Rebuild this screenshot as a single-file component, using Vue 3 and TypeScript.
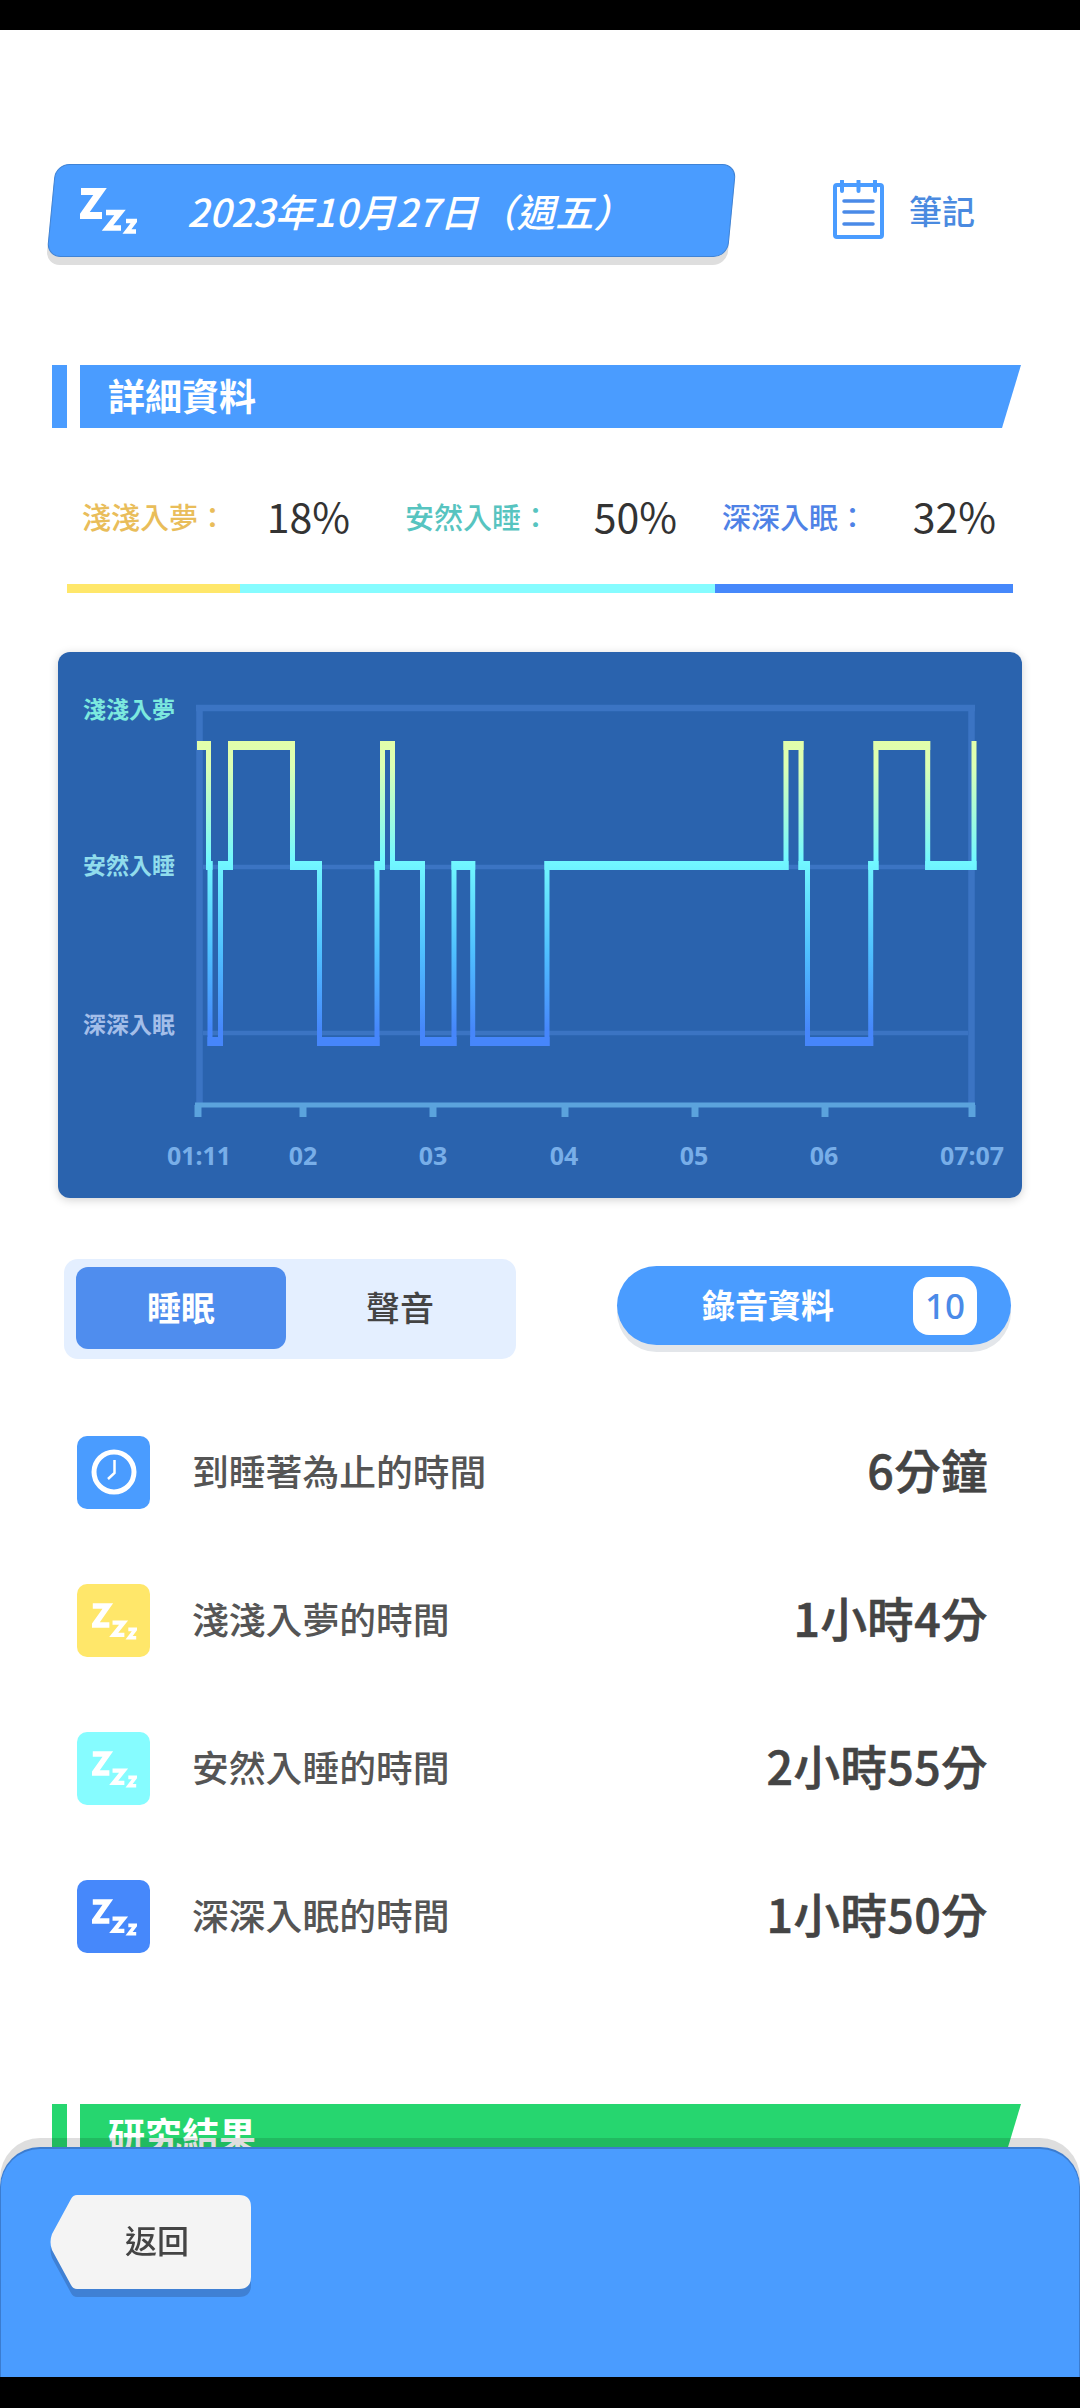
<template>
  <div class="page">
    <div class="status-bar"></div>

    <header class="top">
      <div class="date-pill">
        <svg class="zzz" viewBox="0 0 57 46">
          <path v-for="(d, i) in zzzPaths" :key="i" :d="d" fill="none" stroke="#fff" :stroke-width="zzzWidths[i]" />
        </svg>
        <span class="date-text">2023年10月27日（週五）</span>
      </div>
      <div class="note">
        <svg class="note-icon" viewBox="0 0 51 59">
          <rect x="2" y="5" width="47" height="52" rx="2" fill="none" stroke="#4a9cff" stroke-width="4" />
          <path d="M9 1v10M25.500 1v10M42 1v10" stroke="#4a9cff" stroke-width="4" stroke-linecap="round" />
          <path d="M11 21h29M11 32h29M11 44h29" stroke="#4a8ae8" stroke-width="3.500" stroke-linecap="round" />
        </svg>
        <span>筆記</span>
      </div>
    </header>

    <section class="section-head blue">
      <i class="accent"></i>
      <h2>詳細資料</h2>
    </section>

    <div class="legend">
      <div v-for="item in legend" :key="item.label" class="legend-item">
        <span class="legend-label" :style="{ color: item.color }">{{ item.label }}：</span>
        <span class="legend-value">{{ item.percent }}%</span>
      </div>
    </div>

    <div class="ratio-bar">
      <i v-for="item in legend" :key="item.label" :style="{ width: item.barWidth + 'px', background: item.bar }"></i>
    </div>

    <div class="chart-card">
      <svg class="chart" viewBox="58 652 964 546">
        <defs>
          <linearGradient id="sleepGrad" gradientUnits="userSpaceOnUse" x1="0" y1="741" x2="0" y2="1046">
            <stop offset="0" stop-color="#e2ffaa" />
            <stop offset="0.08" stop-color="#dcffb4" />
            <stop offset="0.39" stop-color="#72f8ff" />
            <stop offset="0.69" stop-color="#4fc0ff" />
            <stop offset="0.95" stop-color="#4686fb" />
          </linearGradient>
        </defs>
        <path d="M196 708H975M199.500 705V1105M971.500 705V1105" stroke="#3b74c3" stroke-width="6.500" fill="none" />
        <path d="M203 867H968M203 1033H968" stroke="#3b74c3" stroke-width="4.500" fill="none" />
        <path d="M195 1105H975" stroke="#5ba3dd" stroke-width="5" fill="none" />
        <path v-for="t in ticks" :key="t.x" :d="`M${t.x} 1105V1117`" stroke="#5ba3dd" stroke-width="7" />
        <path :d="horizontals" stroke="url(#sleepGrad)" stroke-width="9" fill="none" />
        <path :d="verticals" stroke="url(#sleepGrad)" stroke-width="5" fill="none" />
        <text x="83" y="708" class="y-label" fill="#7ce9df">淺淺入夢</text>
        <text x="83" y="864" class="y-label" fill="#90dcec">安然入睡</text>
        <text x="83" y="1023" class="y-label" fill="#a3bee9">深深入眠</text>
        <text v-for="t in ticks" :key="t.text" :x="t.cx" y="1155" class="x-label">{{ t.text }}</text>
      </svg>
    </div>

    <div class="controls">
      <div class="toggle">
        <button class="tab active">睡眠</button>
        <button class="tab second">聲音</button>
      </div>
      <button class="record">
        <span class="record-text">錄音資料</span>
        <b class="badge">10</b>
      </button>
    </div>

    <ul class="rows">
      <li v-for="row in rows" :key="row.label" class="row">
        <span class="row-icon" :style="{ background: row.color }">
          <svg v-if="row.clock" class="clock" viewBox="0 0 73 73">
            <circle cx="37" cy="36" r="20" fill="none" stroke="#fff" stroke-width="5" />
            <path d="M37.500 24V37L31 43" fill="none" stroke="#fff" stroke-width="2.500" />
          </svg>
          <svg v-else class="zzz-small" viewBox="0 0 57 46">
            <path v-for="(d, i) in zzzPaths" :key="i" :d="d" fill="none" stroke="#fff" :stroke-width="zzzWidths[i]" />
          </svg>
        </span>
        <span class="row-label">{{ row.label }}</span>
        <span class="row-value">{{ row.value }}</span>
      </li>
    </ul>

    <section class="section-head green">
      <i class="accent"></i>
      <h2>研究結果</h2>
    </section>

    <div class="dock">
      <div class="panel">
        <div class="back-wrap">
          <button class="back"><span>返回</span></button>
        </div>
      </div>
      <div class="nav-bar"></div>
    </div>
  </div>
</template>

<script setup lang="ts">
type Level = 't' | 'm' | 'd';

const zzzPaths = [
  'M1 3.500H20L3 27.500H22',
  'M26 24.500H40L27.500 40H41',
  'M46 33H55L47 43.500H56',
];
const zzzWidths = [7, 5.5, 4.5];

const legend = [
  { label: '淺淺入夢', percent: 18, color: '#e9bd5a', bar: '#ffe76a', barWidth: 173 },
  { label: '安然入睡', percent: 50, color: '#57c4c0', bar: '#86fcff', barWidth: 475 },
  { label: '深深入眠', percent: 32, color: '#4f82e6', bar: '#4688fb', barWidth: 298 },
];

const ticks = [
  { x: 198, cx: 199, text: '01:11' },
  { x: 303, cx: 303, text: '02' },
  { x: 433, cx: 433, text: '03' },
  { x: 565, cx: 564, text: '04' },
  { x: 695, cx: 694, text: '05' },
  { x: 825, cx: 824, text: '06' },
  { x: 972, cx: 972, text: '07:07' },
];

const levelY: Record<Level, number> = { t: 745.5, m: 865.5, d: 1041.5 };

const steps: [number, Level][] = [
  [208.5, 'm'], [210, 'd'], [220.5, 'm'], [230.5, 't'], [292.5, 'm'],
  [319.5, 'd'], [377, 'm'], [382.5, 't'], [392.5, 'm'], [422.5, 'd'],
  [454, 'm'], [472.7, 'd'], [547, 'm'], [786, 't'], [801, 'm'],
  [807.5, 'd'], [870.7, 'm'], [876, 't'], [927.7, 'm'], [974, 't'],
];

let horizontals = '';
let verticals = '';
let prevX = 199.5;
let prevLevel: Level = 't';
for (const [x, level] of steps) {
  horizontals += `M${prevX - 2.5} ${levelY[prevLevel]}H${x + 2.5}`;
  const a = levelY[prevLevel];
  const b = levelY[level];
  verticals += `M${x} ${Math.min(a, b) - 4.5}V${Math.max(a, b) + 4.5}`;
  prevX = x;
  prevLevel = level;
}

const rows = [
  { label: '到睡著為止的時間', value: '6分鐘', color: '#4a9cff', clock: true },
  { label: '淺淺入夢的時間', value: '1小時4分', color: '#ffe76a', clock: false },
  { label: '安然入睡的時間', value: '2小時55分', color: '#86fcff', clock: false },
  { label: '深深入眠的時間', value: '1小時50分', color: '#4688fb', clock: false },
];
</script>

<style>
html,
body {
  margin: 0;
  background: #fff;
}
</style>

<style scoped>
.page {
  position: relative;
  width: 1080px;
  height: 2408px;
  overflow: hidden;
  background: #fff;
  font-family: "Noto Sans CJK TC", "Noto Sans", sans-serif;
}
.status-bar {
  height: 30px;
  background: #000;
}
.top {
  display: flex;
  align-items: center;
  height: 93px;
  margin-top: 133px;
  padding-left: 51px;
}
.date-pill {
  position: relative;
  display: flex;
  align-items: center;
  width: 681px;
  height: 93px;
  margin-top: 1px;
  color: #fff;
}
.date-pill::before {
  content: "";
  position: absolute;
  inset: 0;
  background: #4a9cff;
  border: 1px solid #3f83d6;
  border-radius: 14px;
  box-shadow: 0 8px 0 #dedede;
  transform: skewX(-5.5deg);
}
.zzz {
  position: relative;
  width: 57px;
  height: 46px;
  margin-left: 29px;
  margin-top: 1px;
}
.date-text {
  position: relative;
  margin-left: 50px;
  font-size: 38.500px;
  font-style: italic;
  font-weight: 500;
  white-space: nowrap;
}
.note {
  display: flex;
  align-items: center;
  margin-left: 101px;
  color: #4a8ae0;
  font-size: 33px;
  font-weight: 500;
}
.note-icon {
  width: 51px;
  height: 59px;
  margin-right: 25px;
}
.section-head {
  display: flex;
  height: 63px;
  margin-left: 52px;
  width: 969px;
}
.section-head.blue {
  margin-top: 109px;
  --head: #4a9cff;
}
.section-head.green {
  margin-top: 151px;
  --head: #26d66f;
}
.accent {
  width: 15px;
  margin-right: 13px;
  background: var(--head);
}
.section-head h2 {
  flex: 1;
  margin: 0;
  padding-left: 28px;
  background: var(--head);
  clip-path: polygon(0 0, 100% 0, calc(100% - 19px) 100%, 0 100%);
  color: #fff;
  font-size: 37px;
  font-weight: 700;
  line-height: 60px;
}
.legend {
  display: flex;
  height: 50px;
  margin-top: 64px;
  padding-left: 82px;
}
.legend-item {
  display: flex;
  align-items: center;
  justify-content: space-between;
}
.legend-item:nth-child(1) {
  width: 268px;
  margin-right: 55px;
}
.legend-item:nth-child(2) {
  width: 272px;
  margin-right: 45px;
}
.legend-item:nth-child(3) {
  width: 274px;
}
.legend-label {
  margin-bottom: 2px;
  font-size: 29px;
  font-weight: 500;
}
.legend-value {
  margin-bottom: 5px;
  color: #333;
  font-size: 41px;
}
.ratio-bar {
  display: flex;
  width: 946px;
  height: 9px;
  margin: 42px 0 0 67px;
}
.chart-card {
  width: 964px;
  height: 546px;
  margin: 59px 0 0 58px;
  border-radius: 12px;
  background: #2a63ae;
  box-shadow: 0 2px 10px rgba(0, 0, 0, 0.18);
}
.chart {
  display: block;
  width: 964px;
  height: 546px;
}
.y-label {
  font-size: 23px;
  font-weight: 700;
  dominant-baseline: central;
}
.x-label {
  fill: #78aee8;
  font-family: "Noto Sans", sans-serif;
  font-size: 25px;
  font-weight: 700;
  text-anchor: middle;
  dominant-baseline: central;
}
.controls {
  display: flex;
  align-items: flex-start;
  margin: 61px 0 0 64px;
}
button {
  border: 0;
  padding: 0;
  font-family: inherit;
}
.toggle {
  display: flex;
  box-sizing: border-box;
  width: 452px;
  height: 100px;
  padding: 8px 0 8px 12px;
  border-radius: 14px;
  background: #e4efff;
}
.tab {
  width: 210px;
  height: 82px;
  padding-bottom: 3px;
  border-radius: 12px;
  background: transparent;
  color: #444;
  font-size: 34px;
  font-weight: 500;
}
.tab.second {
  width: 228px;
}
.tab.active {
  background: #4f8dee;
  color: #fff;
  font-weight: 700;
}
.record {
  display: flex;
  align-items: center;
  width: 394px;
  height: 79px;
  margin: 7px 0 0 101px;
  padding-left: 85px;
  box-sizing: border-box;
  border-radius: 40px;
  background: #4a9cff;
  box-shadow: 0 7px 0 #e3e6ea;
  color: #fff;
  font-size: 33px;
  font-weight: 700;
}
.record-text {
  margin-bottom: 3px;
}
.badge {
  display: block;
  width: 64px;
  height: 58px;
  margin-left: 79px;
  border-radius: 16px;
  background: #fff;
  color: #4a8ae8;
  font-family: "Noto Sans", sans-serif;
  font-size: 35px;
  font-weight: 500;
  line-height: 58px;
}
.rows {
  display: flex;
  flex-direction: column;
  gap: 75px;
  margin: 77px 0 0;
  padding: 0 92px 0 77px;
  list-style: none;
}
.row {
  display: flex;
  align-items: center;
  height: 73px;
}
.row-icon {
  display: flex;
  align-items: center;
  justify-content: center;
  flex: none;
  width: 73px;
  height: 73px;
  border-radius: 10px;
}
.clock {
  width: 73px;
  height: 73px;
}
.zzz-small {
  width: 45px;
  height: 37px;
  margin: 2px 0 0 2px;
}
.row-label {
  margin-left: 42px;
  margin-bottom: 5px;
  color: #555;
  font-size: 36.800px;
  font-weight: 500;
}
.row-value {
  margin-left: auto;
  margin-bottom: 9px;
  color: #444;
  font-size: 46.500px;
  font-weight: 500;
  letter-spacing: 0.4px;
  -webkit-text-stroke: 0.6px #444;
}
.dock {
  position: absolute;
  left: 0;
  right: 0;
  bottom: 0;
}
.panel {
  box-sizing: border-box;
  height: 230px;
  padding: 46px 0 0 48px;
  border: 1px solid #3b7cd0;
  border-top-width: 2px;
  border-bottom: 0;
  border-radius: 40px 40px 0 0;
  background: #4a9cff;
  box-shadow: 0 -9px 0 rgba(0, 0, 0, 0.13);
}
.back-wrap {
  width: 202px;
  height: 94px;
  filter: drop-shadow(0 8px 0 #3f80d4);
}
.back {
  display: block;
  width: 202px;
  height: 94px;
  padding: 0 0 7px 14px;
  background: #f4f4f4;
  clip-path: path("M28 0H190Q202 0 202 12V82Q202 94 190 94H28Q24 94 22 90L3 55Q0 47 3 39L22 4Q24 0 28 0Z");
  color: #444;
  font-size: 32px;
  font-weight: 500;
}
.nav-bar {
  height: 31px;
  background: #000;
}
</style>
